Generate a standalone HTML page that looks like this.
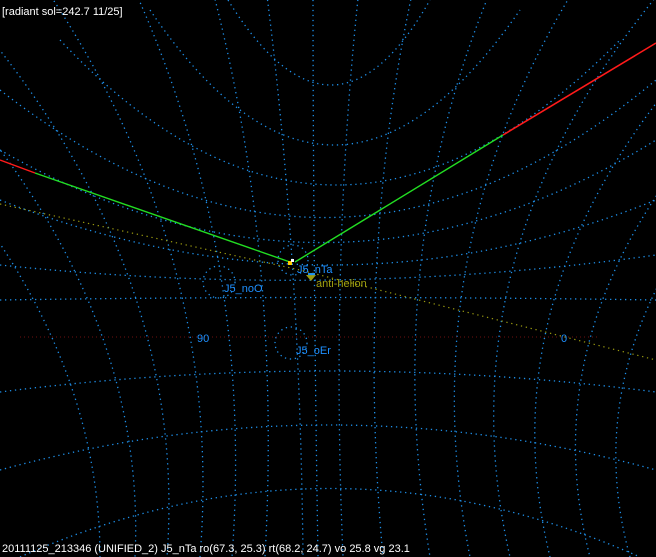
<!DOCTYPE html>
<html><head><style>
html,body{margin:0;padding:0;background:#000;}
svg{display:block}
text{font-family:"Liberation Sans",sans-serif;font-size:11px}
</style></head><body>
<svg width="656" height="557" viewBox="0 0 656 557" xmlns="http://www.w3.org/2000/svg">
<rect width="656" height="557" fill="#000"/>
<g fill="none" stroke="#1e8fe8" stroke-width="1.3" stroke-dasharray="1.3 3.7">
<path d="M228 0 Q333 170 430 0"/>
<path d="M150 10 Q333 280 520 10"/>
<path d="M60 40 Q333 330 620 40"/>
<path d="M0 90 Q333 350 656 80"/>
<path d="M0 150 Q333 340 656 140"/>
<path d="M0 200 Q333 330 656 200"/>
<path d="M0 265 Q333 300 656 255"/>
<path d="M0 300 Q330 295 656 300"/>
<path d="M0 392 Q330 350 656 392"/>
<path d="M0 470 Q330 380 656 470"/>
<path d="M20 557 Q330 420 640 557"/>
<path d="M-260 -20 Q100 250 100 557"/>
<path d="M-160 -20 Q150 250 135 557"/>
<path d="M-60 -20 Q190 250 167 557"/>
<path d="M40 -20 Q225 250 200 557"/>
<path d="M130 -20 Q255 250 232 557"/>
<path d="M210 -20 Q282 250 265 557"/>
<path d="M265 -20 Q300 250 303 557"/>
<path d="M313 -20 Q313 250 318 557"/>
<path d="M360 -20 Q330 250 343 557"/>
<path d="M415 -20 Q355 250 383 557"/>
<path d="M495 -20 Q380 250 430 557"/>
<path d="M580 -20 Q410 250 470 557"/>
<path d="M670 -20 Q440 250 510 557"/>
<path d="M770 -20 Q475 250 550 557"/>
<path d="M870 -20 Q510 250 590 557"/>
<path d="M970 -20 Q545 250 630 557"/>
<circle cx="293" cy="260" r="15"/>
<circle cx="219" cy="282" r="16"/>
<circle cx="291" cy="343" r="16"/>
</g>
<line x1="20" y1="337" x2="600" y2="337" stroke="#701010" stroke-width="1" stroke-dasharray="1 3"/>
<path d="M0 204 L300 270 L656 360" fill="none" stroke="#9a9a10" stroke-width="1.2" stroke-dasharray="1.3 3.7"/>
<line x1="0" y1="160" x2="35" y2="173" stroke="#ff1a1a" stroke-width="1.4"/>
<line x1="35" y1="173" x2="290" y2="262" stroke="#22dd22" stroke-width="1.4"/>
<line x1="295" y1="262" x2="503" y2="135" stroke="#22dd22" stroke-width="1.4"/>
<line x1="503" y1="135" x2="656" y2="43" stroke="#ff1a1a" stroke-width="1.6"/>
<rect x="288" y="261" width="4" height="4" fill="#ffcc00"/>
<rect x="291" y="259" width="3" height="3" fill="#ffffff"/>
<path d="M306 275 L316 275 L311 281 Z" fill="#9a9a10"/>
<rect x="308" y="273" width="7" height="2" fill="#1e8fe8"/>
<text x="297" y="273" fill="#1e90ff">J5_nTa</text>
<text x="316" y="287" fill="#a0a010">anti-helion</text>
<text x="224" y="292" fill="#1e90ff">J5_noO</text>
<text x="296" y="354" fill="#1e90ff">J5_oEr</text>
<text x="197" y="342" fill="#1e90ff">90</text>
<text x="561" y="342" fill="#1e90ff">0</text>
<text x="2" y="15" fill="#fff" font-size="11.3">[radiant sol=242.7 11/25]</text>
<text x="2" y="552" fill="#fff" font-size="11.3">20111125_213346 (UNIFIED_2) J5_nTa ro(67.3, 25.3) rt(68.2, 24.7) vo 25.8 vg 23.1</text>
</svg>
</body></html>
